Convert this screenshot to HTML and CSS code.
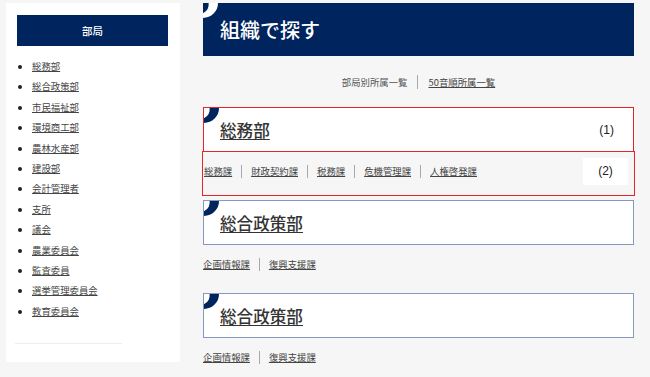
FILE: index.html
```html
<!DOCTYPE html>
<html lang="ja">
<head>
  <meta charset="UTF-8">
  <title>組織で探す</title>
  <link rel="stylesheet" href="styles.css">
</head>
<body>
<div class="page">
  <aside class="side">
    <div class="side-head">部局</div>
    <ul class="side-list">
      <li><a href="#">総務部</a></li>
      <li><a href="#">総合政策部</a></li>
      <li><a href="#">市民福祉部</a></li>
      <li><a href="#">環境商工部</a></li>
      <li><a href="#">農林水産部</a></li>
      <li><a href="#">建設部</a></li>
      <li><a href="#">会計管理者</a></li>
      <li><a href="#">支所</a></li>
      <li><a href="#">議会</a></li>
      <li><a href="#">農業委員会</a></li>
      <li><a href="#">監査委員</a></li>
      <li><a href="#">選挙管理委員会</a></li>
      <li><a href="#">教育委員会</a></li>
    </ul>
    <div class="side-rule"></div>
  </aside>

  <main class="main">
    <div class="hero">
      <svg class="arc" viewBox="0 0 16 16"><path d="M16 0 A16 16 0 0 1 0 16 L0 11 A11 11 0 0 0 6 0 Z"/></svg>
      <h1 class="hero-title">組織で探す</h1>
    </div>

    <nav class="tabs">
      <span class="tab current">部局別所属一覧</span>
      <span class="sep"></span>
      <a class="tab" href="#">50音順所属一覧</a>
    </nav>

    <section class="dept">
      <div class="card marked">
        <svg class="arc" viewBox="0 0 16 16"><path d="M16 0 A16 16 0 0 1 0 16 L0 11 A11 11 0 0 0 6 0 Z"/></svg>
        <a class="card-title" href="#">総務部</a>
        <span class="note">(1)</span>
      </div>
      <div class="subs boxed">
        <a href="#">総務課</a><span class="sep"></span>
        <a href="#">財政契約課</a><span class="sep"></span>
        <a href="#">税務課</a><span class="sep"></span>
        <a href="#">危機管理課</a><span class="sep"></span>
        <a href="#">人権啓発課</a>
        <span class="note-box">(2)</span>
      </div>
    </section>

    <section class="dept">
      <div class="card">
        <svg class="arc" viewBox="0 0 16 16"><path d="M16 0 A16 16 0 0 1 0 16 L0 11 A11 11 0 0 0 6 0 Z"/></svg>
        <a class="card-title" href="#">総合政策部</a>
      </div>
      <div class="subs">
        <a href="#">企画情報課</a><span class="sep"></span>
        <a href="#">復興支援課</a>
      </div>
    </section>

    <section class="dept">
      <div class="card">
        <svg class="arc" viewBox="0 0 16 16"><path d="M16 0 A16 16 0 0 1 0 16 L0 11 A11 11 0 0 0 6 0 Z"/></svg>
        <a class="card-title" href="#">総合政策部</a>
      </div>
      <div class="subs">
        <a href="#">企画情報課</a><span class="sep"></span>
        <a href="#">復興支援課</a>
      </div>
    </section>
  </main>
</div>
</body>
</html>
```

FILE: styles.css
```css
html {
    --navy: #00245e;
    --card-border: #8797bd;
    --mark: #e8242b;
    --text-main: #333333;
    --text-link: #444444;
    --font-small: 9.4px;
}

body {
    margin: 0;
    background: #f6f6f6;
    font-family: "Noto Sans CJK JP", "Noto Sans", sans-serif;
    color: var(--text-main);
    overflow: hidden;
}

a {
    color: var(--text-link);
    text-decoration: underline;
    text-underline-offset: 1px;
}

.page {
    display: flex;
    align-items: flex-start;
    padding: 3px 0 0 6px;
}

/* sidebar */
.side {
    width: 174px;
    box-sizing: border-box;
    background: #ffffff;
    padding: 12px 12px 18px 11px;
}
.side-head {
    height: 31px;
    background: var(--navy);
    color: #ffffff;
    font-size: 10.5px;
    font-weight: 500;
    display: flex;
    align-items: center;
    justify-content: center;
}
.side-list {
    margin: 10px 0 0;
    padding-left: 15px;
    font-size: var(--font-small);
}
.side-list li {
    line-height: 20.4px;
    color: #222222;
}
.side-rule {
    width: 107px;
    height: 1px;
    margin: 22px 0 0 -2px;
    background: #eeeeee;
}

/* main column */
.main {
    width: 431px;
    margin-left: 23px;
}

.arc {
    position: absolute;
    top: 0;
    left: 0;
    width: 15px;
    height: 15px;
}

.hero {
    position: relative;
    height: 53px;
    background: var(--navy);
    display: flex;
    align-items: center;
    padding-left: 17px;
    overflow: hidden;
}
.hero .arc {
    fill: #ffffff;
}
.hero-title {
    margin: 0;
    color: #ffffff;
    font-size: 20px;
    font-weight: 500;
}

.tabs {
    height: 18px;
    margin: 17px 0 16px;
    display: flex;
    align-items: center;
    justify-content: center;
    gap: 10px;
    font-size: var(--font-small);
}
.tab.current {
    color: #555555;
}

.sep {
    width: 1px;
    height: 14px;
    background: #a8a8a8;
}

.card {
    position: relative;
    height: 45px;
    box-sizing: border-box;
    border: 1px solid var(--card-border);
    background: #ffffff;
    display: flex;
    align-items: center;
    padding: 0 19px 0 16px;
}
.card .arc {
    fill: var(--navy);
}
.card-title {
    font-size: 16.6px;
    font-weight: 500;
    color: var(--text-main);
    text-underline-offset: 2px;
}
.note {
    margin-left: auto;
    font-family: "Liberation Sans", sans-serif;
    font-size: 12px;
    color: #222222;
}

.subs {
    height: 18px;
    margin: 10px 0 20px;
    display: flex;
    align-items: center;
    gap: 9px;
    font-size: var(--font-small);
}
.subs .sep {
    height: 13px;
}

/* annotation marks (1) and (2) */
.marked {
    outline: 1.5px solid var(--mark);
    outline-offset: -1px;
}
.subs.boxed {
    margin: 0 0 5px;
    padding: 10px 0 15px 1px;
    outline: 1.5px solid var(--mark);
}
.note-box {
    margin: -5px 6px -5px auto;
    width: 45px;
    height: 27px;
    background: #ffffff;
    display: flex;
    align-items: center;
    justify-content: center;
    font-family: "Liberation Sans", sans-serif;
    font-size: 12px;
    color: #222222;
}
```
